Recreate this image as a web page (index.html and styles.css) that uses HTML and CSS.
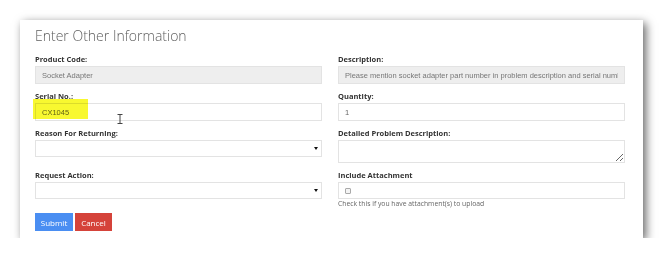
FILE: index.html
```html
<!DOCTYPE html>
<html>
<head>
	<title>Enter Other Information</title>
	<link rel="stylesheet" href="styles.css">
</head>
<body>
	<div class="card">
		<h2 class="card-title">Enter Other Information</h2>
		<form class="form-grid" onsubmit="return false;">
			<div class="field">
				<label for="product-code">Product Code:</label>
				<input type="text" id="product-code" class="form-input readonly" value="Socket Adapter" readonly>
			</div>
			<div class="field">
				<label for="description">Description:</label>
				<input type="text" id="description" class="form-input readonly" value="Please mention socket adapter part number in problem description and serial number" readonly>
			</div>
			<div class="field">
				<label for="serial-no">Serial No.:</label>
				<div class="serial-wrap">
					<input type="text" id="serial-no" class="form-input" value="CX1045">
					<span class="highlight"></span>
					<svg class="ibeam" width="6" height="10" viewBox="0 0 6 10">
						<path d="M0.5 0.5 H5.5 M3 0.5 V9.5 M0.5 9.5 H5.5" stroke="#444" stroke-width="1" fill="none"/>
					</svg>
				</div>
			</div>
			<div class="field">
				<label for="quantity">Quantity:</label>
				<input type="text" id="quantity" class="form-input" value="1">
			</div>
			<div class="field">
				<label for="reason">Reason For Returning:</label>
				<div class="select-wrap">
					<select id="reason" class="form-select"><option></option></select>
					<span class="select-arrow"></span>
				</div>
			</div>
			<div class="field">
				<label for="problem">Detailed Problem Description:</label>
				<textarea id="problem" class="form-textarea"></textarea>
			</div>
			<div class="field">
				<label for="action">Request Action:</label>
				<div class="select-wrap">
					<select id="action" class="form-select"><option></option></select>
					<span class="select-arrow"></span>
				</div>
			</div>
			<div class="field">
				<label for="attach">Include Attachment</label>
				<div class="check-box">
					<input type="checkbox" id="attach" class="form-check">
				</div>
				<span class="help-text">Check this if you have attachment(s) to upload</span>
			</div>
		</form>
		<div class="actions">
			<button class="btn submit-btn">Submit</button>
			<button class="btn cancel-btn">Cancel</button>
		</div>
	</div>
</body>
</html>
```

FILE: styles.css
```css
/* Page */
body {
	margin: 0;
	background-color: #fff;
	font-family: "Open Sans", "Liberation Sans", sans-serif;
}
/* Card */
.card {
	margin: 20px 0 0 20px;
	width: 623px;
	height: 218px;
	box-sizing: border-box;
	padding: 4px 18px 0 15px;
	background-color: #fff;
	box-shadow: 3px 3px 9px rgba(0,0,0,0.6);
}
.card-title {
	margin: 0 0 5px 0;
	font-size: 14px;
	line-height: 24px;
	font-weight: 300;
	color: #5e5e5e;
}
/* Form grid */
.form-grid {
	display: grid;
	grid-template-columns: 1fr 1fr;
	column-gap: 16px;
	row-gap: 6px;
}
.field {
	display: flex;
	flex-direction: column;
}
.field label {
	font-size: 7.5px;
	line-height: 13px;
	font-weight: 700;
	color: #333;
}
.form-input, .form-select, .form-textarea {
	display: block;
	box-sizing: border-box;
	width: 100%;
	margin: 0;
	border: 1px solid #e3e3e3;
	background-color: #fff;
	font-family: "Liberation Sans", Arial, sans-serif;
	font-size: 7.5px;
	color: #666;
	outline: none;
}
.form-input {
	height: 18px;
	padding: 0 6px;
}
.readonly {
	background-color: #eee;
	color: #777;
}
.form-select {
	height: 17px;
	-webkit-appearance: none;
	appearance: none;
	border-radius: 0;
}
.form-textarea {
	height: 23px;
	resize: vertical;
}
/* Select arrow */
.select-wrap {
	position: relative;
}
.select-arrow {
	position: absolute;
	right: 4px;
	top: 7px;
	border-left: 2px solid transparent;
	border-right: 2px solid transparent;
	border-top: 3px solid #111;
}
/* Serial highlight */
.serial-wrap {
	position: relative;
}
.highlight {
	position: absolute;
	left: -2px;
	top: -4px;
	width: 55px;
	height: 20px;
	background-color: #f8f830;
	mix-blend-mode: multiply;
	filter: blur(0.5px);
}
.ibeam {
	position: absolute;
	left: 82px;
	top: 11px;
}
/* Attachment */
.check-box {
	box-sizing: border-box;
	height: 17px;
	border: 1px solid #e3e3e3;
	display: flex;
	align-items: center;
	padding-left: 6px;
}
.form-check {
	-webkit-appearance: none;
	appearance: none;
	margin: 0;
	width: 6px;
	height: 6px;
	border: 1px solid #aaa;
	border-radius: 1px;
	background-color: #f4f4f4;
}
.help-text {
	font-size: 6.8px;
	line-height: 10px;
	color: #666;
}
/* Buttons */
.actions {
	display: flex;
	gap: 2px;
	margin-top: 4px;
}
.btn {
	height: 18px;
	padding: 0;
	border: none;
	color: #fff;
	font-family: "Open Sans", sans-serif;
	font-size: 8px;
	cursor: pointer;
}
.submit-btn {
	width: 38px;
	background-color: #4a8ef2;
}
.cancel-btn {
	width: 37px;
	background-color: #d5433a;
}
```
